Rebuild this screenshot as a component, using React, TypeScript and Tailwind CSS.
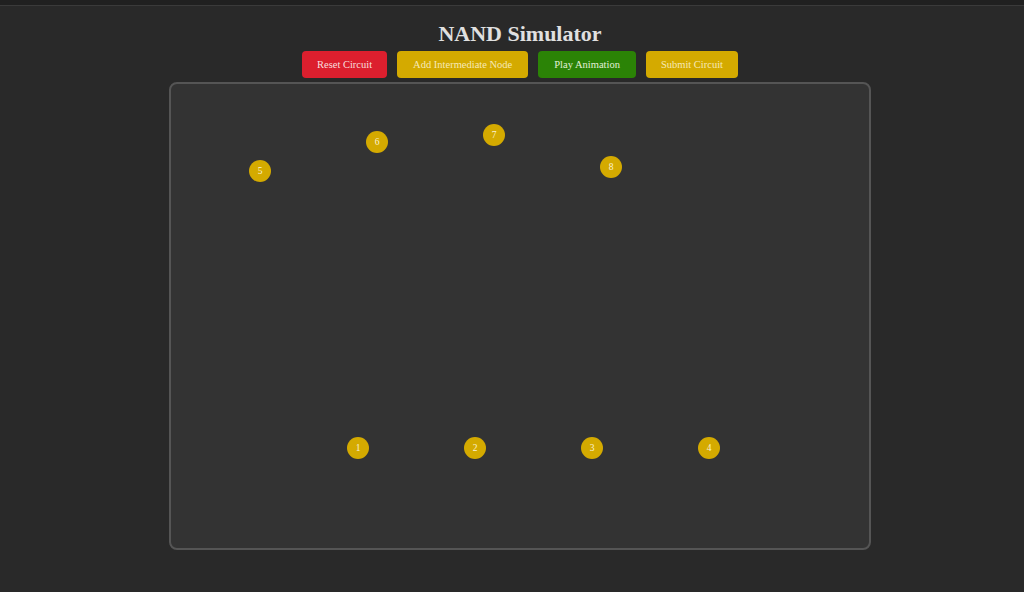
import React from "react";

const nodes = [
  { id: 5, x: 89, y: 87 },
  { id: 6, x: 206, y: 58 },
  { id: 7, x: 323, y: 51 },
  { id: 8, x: 440, y: 83 },
  { id: 1, x: 187, y: 364 },
  { id: 2, x: 304, y: 364 },
  { id: 3, x: 421, y: 364 },
  { id: 4, x: 538, y: 364 },
];

const App = () => {
  return (
    <div
      className="min-h-[592px] w-full bg-[#292929] text-[#ddd]"
      style={{ fontFamily: '"Liberation Serif", "Times New Roman", serif' }}
    >
      <div className="h-[6px] bg-[#202020] border-b border-[#3a3a3a]" />
      <div className="flex flex-col items-center pl-4">
        <h1 className="mt-[15px] text-[22px] leading-[26px] font-bold text-[#e0e0e0]">
          NAND Simulator
        </h1>
        <div className="mt-[4px] flex gap-[10px] text-[10.5px]">
          <button className="h-[27px] px-[15px] rounded bg-[#dc1f2e] text-[#f8dede]">
            Reset Circuit
          </button>
          <button className="h-[27px] px-[16px] rounded bg-[#d4aa00] text-[#f6e9b6]">
            Add Intermediate Node
          </button>
          <button className="h-[27px] px-[16px] rounded bg-[#2b8306] text-[#e2f0d8]">
            Play Animation
          </button>
          <button className="h-[27px] px-[15px] rounded bg-[#d4aa00] text-[#f6e9b6]">
            Submit Circuit
          </button>
        </div>
        <div className="relative mt-[4px] w-[702px] h-[468px] rounded-lg border-2 border-[#555] bg-[#333]">
          {nodes.map((n) => (
            <div
              key={n.id}
              className="absolute flex h-[22px] w-[22px] items-center justify-center rounded-full bg-[#d4aa00] text-[9.5px] text-[#fbf3d6]"
              style={{ left: n.x - 11, top: n.y - 11 }}
            >
              {n.id}
            </div>
          ))}
        </div>
      </div>
    </div>
  );
};

export default App;
